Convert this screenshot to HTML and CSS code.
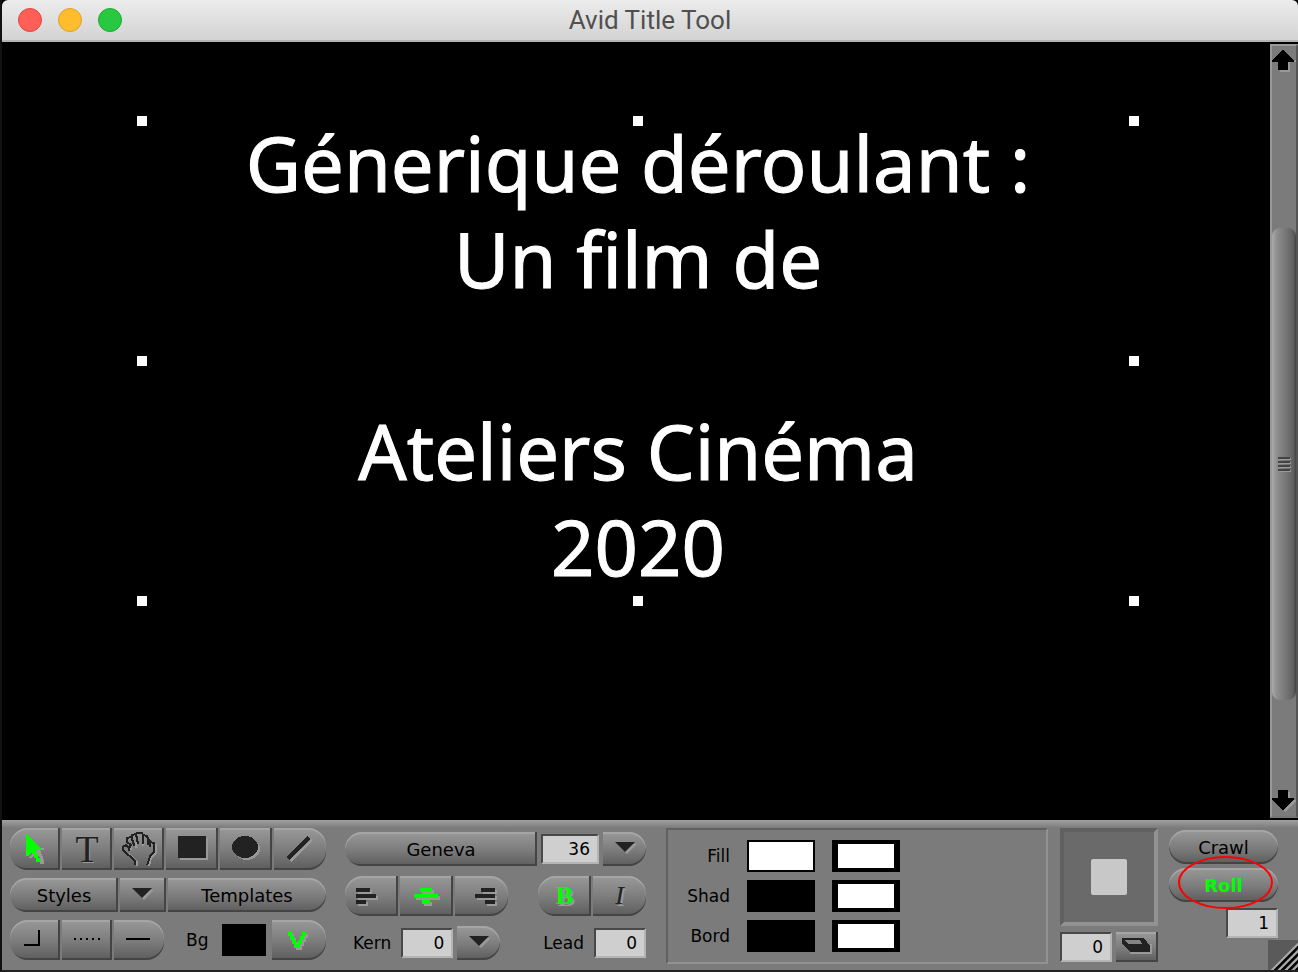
FILE: index.html
```html
<!DOCTYPE html>
<html lang="fr">
<head>
    <meta charset="UTF-8">
    <title>Avid Title Tool</title>
    <link rel="stylesheet" href="styles.css">
</head>
<body>
    <div class="window">
        <!-- Title bar -->
        <header class="titlebar">
            <div class="lights">
                <button class="light red" aria-label="Close"></button>
                <button class="light yellow" aria-label="Minimize"></button>
                <button class="light green" aria-label="Zoom"></button>
            </div>
            <h1>Avid Title Tool</h1>
        </header>

        <!-- Title canvas -->
        <main class="stage">
            <div class="canvas">
                <div class="textbox">
                    <div class="title-text">
                        <p>Génerique déroulant :</p>
                        <p>Un film de</p>
                        <p>&nbsp;</p>
                        <p>Ateliers Cinéma</p>
                        <p>2020</p>
                    </div>
                    <i class="handle top left"></i>
                    <i class="handle top middle"></i>
                    <i class="handle top right"></i>
                    <i class="handle center left"></i>
                    <i class="handle center right"></i>
                    <i class="handle bottom left"></i>
                    <i class="handle bottom middle"></i>
                    <i class="handle bottom right"></i>
                </div>
            </div>
            <div class="scrollbar">
                <button class="arrow" aria-label="Scroll up">
                    <svg width="24" height="26" shape-rendering="crispEdges"><path class="shade" d="M8 16h10v10H8zM18 14h6v2h-6z"/><path d="M11 4L22 14v2H16v8H6V16H0V14z"/></svg>
                </button>
                <div class="track">
                    <div class="thumb"><i></i><i></i><i></i><i></i></div>
                </div>
                <button class="arrow" aria-label="Scroll down">
                    <svg width="24" height="26" shape-rendering="crispEdges"><path class="shade" d="M8 2h10v8h6v2L13 22l-3-4z"/><path d="M6 0h10v8h6v2L11 20 0 10V8h6z"/></svg>
                </button>
            </div>
        </main>

        <!-- Tool palette -->
        <footer class="toolbar">
            <section class="group tools">
                <div class="row">
                    <button class="btn tall first" aria-label="Selection"><svg class="on" width="50" height="42" shape-rendering="crispEdges"><path class="shade" d="M18 30h4l4-5 4 5v6h4v-4l-4-10h4v-2h-4z"/><path d="M16 6L32 22H26V26H28V30H30V34H26V30H24V26H22V24L18 28H16z"/></svg></button>
                    <button class="btn tall serif" aria-label="Text">T</button>
                    <button class="btn tall" aria-label="Hand"><svg width="50" height="42" shape-rendering="crispEdges"><path class="line light-line" d="M23 38V34L15 26M17 22V18M42 16V25L37 30L35 38M22 20V14M29 18V9"/><path class="line" d="M21 37V33L17 29L13 26L9 22V19L12 17L15 20V23M15 20L17 17L13 14V10L17 9L20 16M20 18L18 11V7L22 6L24 16M23 6V5H28L29 7V16M29 7L33 8L34 11V17M34 11L36 13V19M36 14L40 15V24L36 28L35 32L33 37"/></svg></button>
                    <button class="btn tall wide" aria-label="Rectangle"><svg width="52" height="42"><path class="shade" d="M14 10h28v22H14z"/><path d="M12 8h28v22H12z"/></svg></button>
                    <button class="btn tall wide" aria-label="Oval"><svg width="52" height="42" shape-rendering="crispEdges"><ellipse class="shade" cx="27" cy="21" rx="13" ry="11"/><ellipse cx="25" cy="19" rx="13" ry="11"/></svg></button>
                    <button class="btn tall wide last" aria-label="Line"><svg width="52" height="42" shape-rendering="crispEdges"><path class="shade" d="M16 31L38 11v3L17 34z"/><path d="M12 29L34 8l2 3L15 32z"/></svg></button>
                </div>
                <div class="row">
                    <button class="btn first styles">Styles</button>
                    <button class="btn menu" aria-label="Styles menu"><svg width="46" height="34"><path class="shade" d="M14 12h20L24 22z"/><path d="M12 10h20L22 20z"/></svg></button>
                    <button class="btn last grow">Templates</button>
                </div>
                <div class="row">
                    <button class="btn mid first" aria-label="Corner"><svg width="50" height="40" shape-rendering="crispEdges"><path class="ink" d="M14 25H29V10"/></svg></button>
                    <button class="btn mid" aria-label="Dashes"><svg width="50" height="40" shape-rendering="crispEdges"><path class="ink dash" d="M12 19H38"/></svg></button>
                    <button class="btn mid last" aria-label="Line weight"><svg width="50" height="40" shape-rendering="crispEdges"><path class="ink" d="M12 19H36"/></svg></button>
                    <span class="bg-label">Bg</span>
                    <button class="swatch bg" aria-label="Background colour"></button>
                    <button class="btn mid last video" aria-label="Video background"><svg width="54" height="40" shape-rendering="crispEdges"><path class="shade" d="M18 14h4v4h2v4h2v2h2v-2h2v-4h2v-4h4v4h-2v4h-2v4h-2v4h-6v-4h-2v-4h-2v-4h-2z"/><path class="on" d="M16 12h4v4h2v4h2v4h2v-4h2v-4h2v-4h4v4h-2v4h-2v4h-2v4h-6v-4h-2v-4h-2v-4h-2z"/></svg></button>
                </div>
            </section>

            <section class="group type">
                <div class="row">
                    <button class="btn first grow">Geneva</button>
                    <input class="field size" aria-label="Font size" value="36">
                    <button class="btn last drop" aria-label="Font size menu"><svg width="43" height="34"><path class="shade" d="M14 12h20L24 22z"/><path d="M12 10h20L22 20z"/></svg></button>
                </div>
                <div class="row aligns">
                    <button class="btn mid first seg" aria-label="Align left"><svg width="53" height="40"><path class="shade" d="M13 14h14v4H13zM13 20h20v4H13zM13 26h10v4H13z"/><path d="M11 12h14v4H11zM11 18h20v4H11zM11 24h10v4H11z"/></svg></button>
                    <button class="btn mid seg" aria-label="Align center"><svg class="on" width="53" height="40"><path class="shade" d="M22 14h12v4H22zM16 20h24v4H16zM24 26h8v4h-8z"/><path d="M20 12h12v4H20zM14 18h24v4H14zM22 24h8v4h-8z"/></svg></button>
                    <button class="btn mid last seg" aria-label="Align right"><svg width="53" height="40"><path class="shade" d="M28 14h14v4H28zM22 20h20v4H22zM32 26h10v4H32z"/><path d="M26 12h14v4H26zM20 18h20v4H20zM30 24h10v4H30z"/></svg></button>
                    <button class="btn mid first seg bold">B</button>
                    <button class="btn mid last seg italic">I</button>
                </div>
                <div class="row spacing">
                    <label for="kern">Kern</label>
                    <input class="field" id="kern" value="0">
                    <button class="btn last drop" aria-label="Kern menu"><svg width="43" height="34"><path class="shade" d="M14 12h20L24 22z"/><path d="M12 10h20L22 20z"/></svg></button>
                    <label class="lead" for="lead">Lead</label>
                    <input class="field" id="lead" value="0">
                </div>
            </section>

            <section class="colors">
                <span>Fill</span><button class="swatch white" aria-label="Fill colour"></button><button class="swatch opacity" aria-label="Fill opacity"></button>
                <span>Shad</span><button class="swatch" aria-label="Shadow colour"></button><button class="swatch opacity" aria-label="Shadow opacity"></button>
                <span>Bord</span><button class="swatch" aria-label="Border colour"></button><button class="swatch opacity" aria-label="Border opacity"></button>
            </section>

            <section class="shadow">
                <div class="preview"><i></i></div>
                <div class="row">
                    <input class="field" aria-label="Shadow depth" value="0">
                    <button class="btn depth" aria-label="Shadow type"><svg width="42" height="30" shape-rendering="crispEdges"><path class="shade" d="M14 20h22v2H14zM34 12h2v10h-2z"/><path d="M6 6H28L34 14V20H14L6 12z"/><path class="face" d="M8 8H24L26 12H12z"/></svg></button>
                </div>
            </section>

            <section class="motion">
                <button class="btn first last">Crawl</button>
                <div class="roll">
                    <button class="btn first last active">Roll</button>
                    <span class="ring"></span>
                </div>
                <input class="field" aria-label="Page" value="1">
            </section>

            <svg class="grip" width="30" height="30"><path class="grip-dark" d="M6 31L31 6M13 31L31 13M20 31L31 20M27 31L31 27"/><path class="grip-light" d="M3 31L31 3M10 31L31 10M17 31L31 17M24 31L31 24"/></svg>
        </footer>
    </div>
</body>
</html>
```

FILE: styles.css
```css
* {
    box-sizing: border-box;
}
body {
    margin: 0;
    background: #000;
    font-family: "DejaVu Sans", sans-serif;
    font-size: 17px;
    color: #000;
}
button, input {
    font: inherit;
    color: inherit;
    margin: 0;
    padding: 0;
    border: 0;
    border-radius: 0;
}
svg {
    display: block;
    fill: #222;
}
.window {
    min-height: 100vh;
    display: flex;
    flex-direction: column;
    border-left: 2px solid #111;
    border-bottom: 2px solid #222;
}

/* Title bar */
.titlebar {
    display: grid;
    grid-template-columns: 1fr auto 1fr;
    align-items: center;
    height: 42px;
    padding: 0 16px;
    background: linear-gradient(#ececec, #d3d3d3);
    border-bottom: 2px solid #b4b4b4;
    border-radius: 6px 6px 0 0;
}
.titlebar h1 {
    margin: 0;
    font: 400 26px/40px Roboto, sans-serif;
    color: #505050;
}
.lights {
    display: flex;
    gap: 16px;
}
.light {
    width: 24px;
    height: 24px;
    border-radius: 50%;
}
.red { background: #ff5f57; border: 1px solid #e2463f; }
.yellow { background: #ffbd2e; border: 1px solid #e0a028; }
.green { background: #28c940; border: 1px solid #14ae2c; }

/* Canvas */
.stage {
    flex: 1;
    display: flex;
}
.canvas {
    flex: 1;
    padding: 79px 0 0 4px;
}
.textbox {
    display: flow-root;
    position: relative;
    width: 78.5%;
    margin: 0 auto;
    padding-bottom: 6px;
}
.title-text {
    margin-top: -6px;
    color: #fff;
    font-family: "Noto Sans", sans-serif;
    font-size: 76px;
    line-height: 96px;
    text-align: center;
    -webkit-text-stroke: 1px #fff;
}
.title-text p {
    margin: 0;
}
.handle {
    position: absolute;
    width: 10px;
    height: 10px;
    margin: -5px;
    background: #fff;
}
.top { top: 0; }
.center { top: 50%; }
.bottom { bottom: 0; }
.left { left: 0; }
.middle { left: 50%; }
.right { right: 0; }

/* Scrollbar */
.scrollbar {
    display: flex;
    flex-direction: column;
    width: 28px;
    margin: 2px 0;
    background: #7b7b7b;
    border: 2px solid #999;
    border-right-color: #555;
    border-bottom-color: #777;
}
.arrow {
    height: 26px;
    background: none;
}
.arrow svg {
    fill: #000;
}
.track {
    flex: 1;
    display: flex;
    flex-direction: column;
    padding: 156px 0 90px;
}
.thumb {
    flex: 1;
    display: flex;
    flex-direction: column;
    align-items: center;
    justify-content: center;
    gap: 2px;
    border-radius: 8px;
    background: linear-gradient(90deg, #aaa, #8f8f8f 20%, #616161 88%, #444);
}
.thumb i {
    width: 12px;
    height: 2px;
    background: #444;
    box-shadow: 1px 1px #999;
}

/* Toolbar */
.toolbar {
    position: relative;
    display: flex;
    align-items: flex-start;
    height: 150px;
    padding: 8px 20px 0 8px;
    background: linear-gradient(#a0a0a0, #7b7b7b 8px);
}
.row {
    display: flex;
    align-items: center;
    gap: 2px;
}
.group {
    display: flex;
    flex-direction: column;
    gap: 8px;
}
.btn {
    flex: none;
    display: flex;
    align-items: center;
    justify-content: center;
    height: 34px;
    background: linear-gradient(#999, #7b7b7b 55%, #5c5c5c);
    border-radius: 0;
    box-shadow: inset -2px -2px #444, inset 0 2px #a5a5a5;
    font-size: 18px;
}
.first {
    border-top-left-radius: 18px;
    border-bottom-left-radius: 18px;
}
.last {
    border-top-right-radius: 18px;
    border-bottom-right-radius: 18px;
    box-shadow: inset 0 -2px #444, inset 0 2px #a5a5a5;
}
.tall { width: 50px; height: 42px; }
.tall.wide { width: 52px; }
.mid { width: 50px; height: 40px; }
.grow { flex: 1; }
.styles { width: 108px; }
.menu { width: 46px; }
.video { width: 54px; }
.seg { width: 53px; }
.drop { width: 43px; }
.serif {
    font: 38px/38px "Liberation Serif", serif;
    color: #222;
    text-shadow: 1px 1px #999;
}
.shade { fill: #999; }
.on { fill: #0f0; }
.line, .ink {
    fill: none;
    stroke: #222;
    stroke-width: 2px;
}
.light-line { stroke: #999; }
.ink { stroke: #000; }
.dash { stroke-dasharray: 2px 4px; }

.swatch {
    width: 68px;
    height: 32px;
    background: #000;
}
.white {
    background: #fff;
    border: 2px solid #000;
}
.opacity {
    background: #fff;
    border: 4px solid #000;
    border-width: 4px 6px;
}
.bg {
    width: 44px;
    margin-left: 12px;
}
.video {
    margin-left: auto;
}
.bg-label {
    margin-left: 20px;
}
.field {
    width: 52px;
    height: 30px;
    padding-right: 7px;
    background: #cfcfcf;
    border: 2px solid #484848;
    border-right-color: #b4b4b4;
    border-bottom-color: #b4b4b4;
    text-align: right;
}

/* Font, alignment, kerning */
.tools {
    width: 316px;
}
.type {
    width: 301px;
    margin: 4px 0 0 19px;
    gap: 10px;
}
.type .row:first-child {
    gap: 4px;
}
.size {
    width: 58px;
}
.bold, .italic {
    font: bold 26px/30px "Liberation Serif", serif;
    text-shadow: 2px 2px #999;
    color: #0f0;
}
.bold {
    margin-left: auto;
}
.italic {
    font-style: italic;
    font-weight: normal;
    color: #222;
}
.spacing {
    gap: 4px;
    padding-left: 8px;
}
.spacing .field {
    margin-left: 6px;
}
.spacing .lead {
    margin-left: auto;
}

/* Fill, shadow, border colours */
.colors {
    flex: 1;
    display: grid;
    grid-template-columns: 62px 68px 68px;
    column-gap: 17px;
    row-gap: 8px;
    align-items: center;
    align-content: center;
    height: 136px;
    margin-left: 20px;
    border: 2px solid #606060;
    border-right-color: #929292;
    border-bottom-color: #929292;
}
.colors span {
    text-align: right;
}

/* Shadow depth */
.shadow {
    display: flex;
    flex-direction: column;
    gap: 6px;
    width: 98px;
    margin-left: 12px;
}
.shadow .row {
    justify-content: space-between;
}
.preview {
    display: flex;
    align-items: center;
    justify-content: center;
    height: 98px;
    background: #6a6a6a;
    border: 4px solid #606060;
    border-right-color: #929292;
    border-bottom-color: #929292;
}
.preview i {
    width: 36px;
    height: 36px;
    background: #c8c8c8;
    border-radius: 2px;
}
.depth {
    width: 42px;
    height: 30px;
}
.face {
    fill: #858585;
}

/* Roll and crawl */
.motion {
    display: flex;
    flex-direction: column;
    align-items: flex-end;
    gap: 4px;
    width: 109px;
    margin: 2px 0 0 11px;
}
.motion .btn {
    width: 109px;
}
.motion .field {
    margin-top: 2px;
}
.roll {
    position: relative;
}
.active {
    font-weight: bold;
    color: #0f0;
}
.ring {
    position: absolute;
    top: -12px;
    left: 9px;
    width: 95px;
    height: 53px;
    border: 2px solid #f00;
    border-radius: 50%;
    pointer-events: none;
}
.grip {
    position: absolute;
    right: 0;
    bottom: 0;
    background: #5a5a5a;
}
.grip-dark, .grip-light {
    fill: none;
    stroke: #000;
    stroke-width: 3px;
}
.grip-light {
    stroke: #aaa;
    stroke-width: 2px;
}
```
